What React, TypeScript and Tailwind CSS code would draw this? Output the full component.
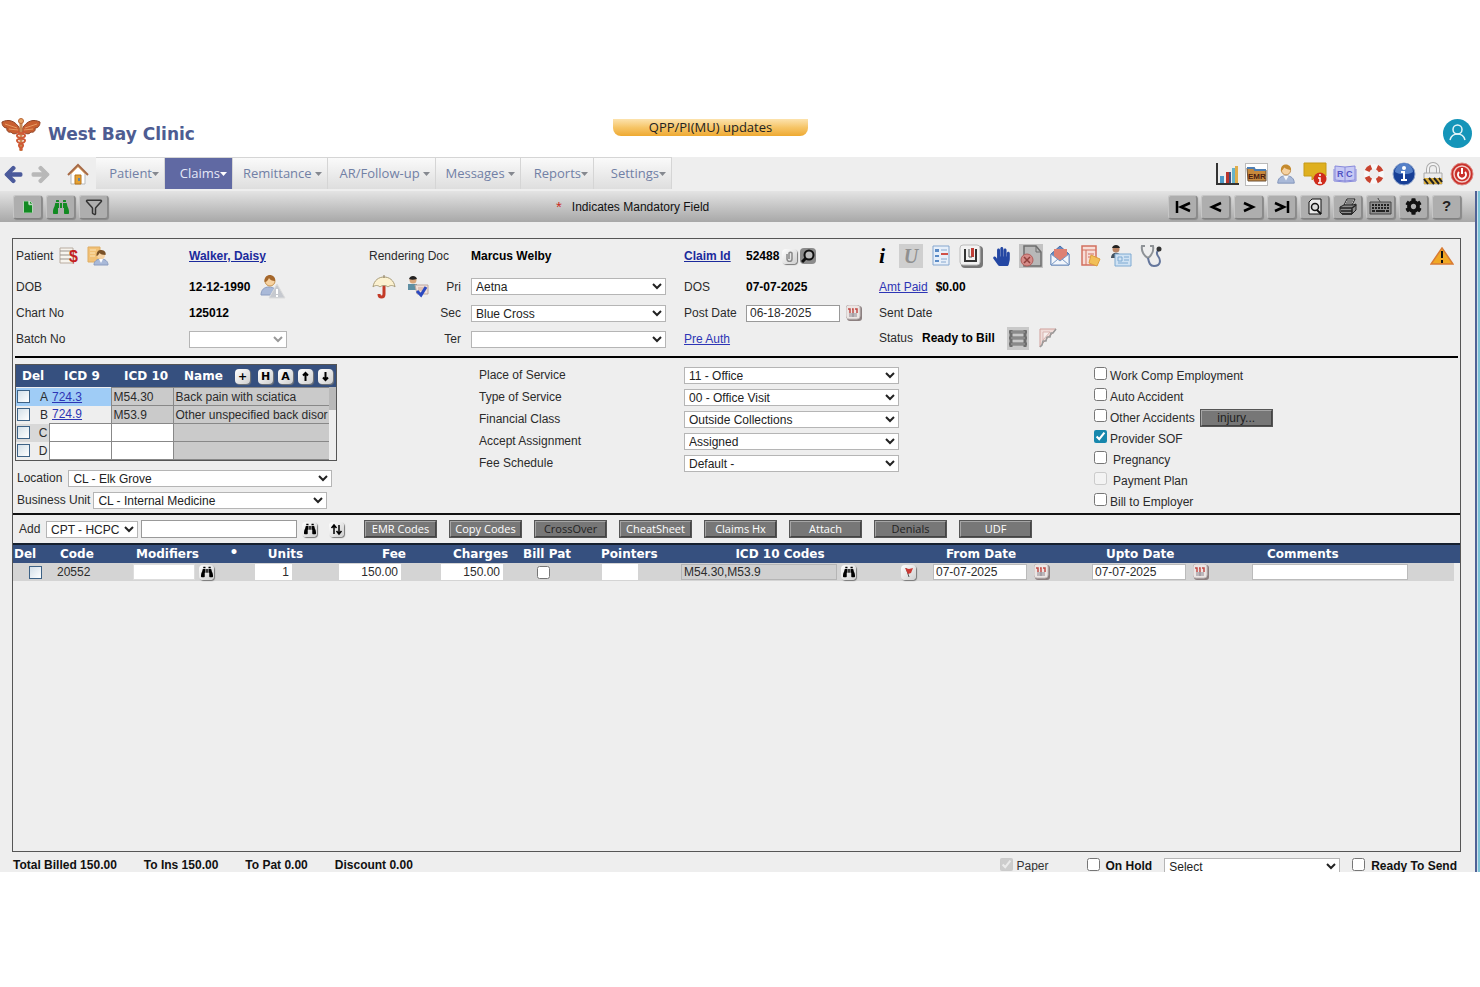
import { useState } from "react";
import type { ReactNode } from "react";
import {
  FaArrowLeft,
  FaArrowRight,
  FaBinoculars,
  FaCog,
  FaFile,
  FaHandPaper,
} from "react-icons/fa";
import { Filter } from "lucide-react";

interface ChildrenProps {
  children: ReactNode;
}

interface SelectBoxProps {
  label: string;
  value: string;
  className: string;
  disabled?: boolean;
}

interface CheckItemProps {
  label: string;
  checked?: boolean;
  disabled?: boolean;
  indent?: boolean;
}

const navItems = [
  { label: "Patient", width: "w-[69px]" },
  { label: "Claims", width: "w-[68px]" },
  { label: "Remittance ", width: "w-[95px]" },
  { label: "AR/Follow-up ", width: "w-[108px]" },
  { label: "Messages ", width: "w-[85px]" },
  { label: "Reports", width: "w-[73px]" },
  { label: "Settings", width: "w-[78px]" },
];

const serviceFields = [
  { label: "Place of Service", value: "11 - Office" },
  { label: "Type of Service", value: "00 - Office Visit" },
  { label: "Financial Class", value: "Outside Collections" },
  { label: "Accept Assignment", value: "Assigned" },
  { label: "Fee Schedule", value: "Default -" },
];

const diagnoses = [
  { key: "A", icd9: "724.3", icd10: "M54.30", name: "Back pain with sciatica" },
  { key: "B", icd9: "724.9", icd10: "M53.9", name: "Other unspecified back disor" },
  { key: "C", icd9: "", icd10: "", name: "" },
  { key: "D", icd9: "", icd10: "", name: "" },
];

const claimActions = [
  { label: "EMR Codes", disabled: false },
  { label: "Copy Codes", disabled: false },
  { label: "CrossOver", disabled: true },
  { label: "CheatSheet", disabled: false },
  { label: "Claims Hx", disabled: false },
  { label: "Attach", disabled: false },
  { label: "Denials", disabled: true },
  { label: "UDF", disabled: false },
];

/* ---------- small controls ---------- */

function SelectBox({ label, value, className, disabled }: SelectBoxProps) {
  return (
    <select
      aria-label={label}
      disabled={disabled}
      className={`h-[17px] border border-[#b5b5b5] bg-white text-[12px] leading-[15px] text-[#222] disabled:text-[#999] ${className}`}
    >
      <option>{value}</option>
    </select>
  );
}

function CheckItem({ label, checked, disabled, indent }: CheckItemProps) {
  return (
    <label className="flex h-[21px] items-center">
      <input
        type="checkbox"
        defaultChecked={checked}
        disabled={disabled}
        className="mb-1 h-[13px] w-[13px] accent-[#1787ad]"
      />
      <span className={indent ? "ml-[6px]" : "ml-[3px]"}>{label}</span>
    </label>
  );
}

function SquareCheck({ label }: { label: string }) {
  return (
    <input
      type="checkbox"
      aria-label={label}
      className="block h-[13px] w-[13px] shrink-0 appearance-none border border-[#3d6286] bg-linear-to-br from-[#d3dfe8] to-white"
    />
  );
}

function Tile({ label, children }: ChildrenProps & { label: string }) {
  return (
    <button
      type="button"
      aria-label={label}
      className="flex h-[15px] w-[15px] shrink-0 items-center justify-center rounded-[4px] bg-linear-to-br from-white to-[#cfcfcf] text-[11px] leading-none font-bold text-black shadow-[1px_1px_1px_#777]"
    >
      {children}
    </button>
  );
}

function ToolButton({ label, children }: ChildrenProps & { label: string }) {
  return (
    <button
      type="button"
      aria-label={label}
      className="flex h-[24px] w-[29px] items-center justify-center rounded-[3px] border border-t-[#c6c6c6] border-r-[#8a8a8a] border-b-[#808080] border-l-[#c6c6c6] bg-[#aeaeae] text-black shadow-[1px_1px_1px_#888]"
    >
      {children}
    </button>
  );
}

function IconButton({ label, children }: ChildrenProps & { label: string }) {
  return (
    <button type="button" aria-label={label} className="flex shrink-0 items-center justify-center">
      {children}
    </button>
  );
}

function GrayButton({ label, disabled, className }: { label: string; disabled?: boolean; className: string }) {
  return (
    <button
      type="button"
      disabled={disabled}
      className={`h-[18px] w-[73px] border-2 border-t-[#a5a5a5] border-r-[#444] border-b-[#444] border-l-[#a5a5a5] bg-[#777] text-center outline outline-[#555] -outline-offset-1 ${
        disabled ? "text-[#222]" : "text-white"
      } ${className}`}
    >
      {label}
    </button>
  );
}

/* ---------- icons ---------- */

function CaduceusLogo() {
  return (
    <svg width="40" height="34" viewBox="0 0 40 34">
      <path
        d="M19 11C14 2 7 1 1 4c0 4 2 6 5 6-1 3 2 5 4 4 2 3 6 2 9-1zM21 11c5-9 12-10 18-7 0 4-2 6-5 6 1 3-2 5-4 4-2 3-6 2-9-1z"
        fill="#c85f30"
        stroke="#8f4326"
      />
      <path d="M4 6l12 4M8 11l9 1M36 6l-12 4M32 11l-9 1" stroke="#e79a62" />
      <path d="M20 4v29" stroke="#c98a55" strokeWidth="3" />
      <path
        d="M15 13c2 3 10 2 9 5s-9 2-8 5 7 2 6 5-4 2-2 4M25 13c-2 3-10 2-9 5s9 2 8 5-7 2-6 5 4 2 2 4"
        fill="none"
        stroke="#cf5a35"
        strokeWidth="2"
      />
      <circle cx="20" cy="3" r="2.500" fill="#e8a564" stroke="#b86534" />
    </svg>
  );
}

function PersonIcon({ size = 24 }: { size?: number }) {
  return (
    <svg width={size} height={size} viewBox="0 0 24 24">
      <path d="M3 22c0-5 3-8 9-8s9 3 9 8z" fill="#a9b9d8" stroke="#7f92b8" />
      <path d="M9 14l3 5 3-5z" fill="#f5f7fb" />
      <circle cx="12" cy="8" r="5" fill="#f6d2a2" stroke="#b98546" />
      <path d="M6.500 9C6 3 9 1.500 12 1.500S18 4 17.500 8C15 7 12 7 10 5 9 7 8 8 6.500 9z" fill="#c58a2d" />
    </svg>
  );
}

function HomeIcon() {
  return (
    <svg width="22" height="22" viewBox="0 0 22 22">
      <path d="M4 11v10h14V11l-7-7z" fill="#fff" stroke="#b9b9b9" />
      <path d="M1 12L11 2l10 10" fill="none" stroke="#a76a45" strokeWidth="2" />
      <path d="M4 11l7-7 7 7" fill="none" stroke="#edbd85" />
      <path d="M8 12h6v9H8z" fill="#e5a233" stroke="#b8741c" />
      <path d="M11 15h2v3h-2z" fill="#6585a5" />
    </svg>
  );
}

function StatsIcon() {
  return (
    <svg width="24" height="24" viewBox="0 0 24 24">
      <path d="M2 1v21h22" fill="none" stroke="#333" strokeWidth="2" />
      <path d="M5 14h4v7H5z" fill="#4d9ac8" />
      <path d="M11 10h4v11h-4z" fill="#b9352d" />
      <path d="M14 10h2v11h-2z" fill="#3e4f80" />
      <path d="M17 6h3v15h-3z" fill="#67b3c9" />
      <path d="M20 4h3v17h-3z" fill="#e0ad4b" />
    </svg>
  );
}

function EmrIcon() {
  return (
    <span className="flex h-[23px] w-[23px] items-center justify-center border border-[#bbb] bg-white">
      <svg width="21" height="16" viewBox="0 0 21 16">
        <path d="M1 2h7l1 2h11v11H2z" fill="#c7893c" stroke="#6b5136" />
        <path d="M1 2h7l1 2h11" fill="none" stroke="#4d7eb3" strokeWidth="2" />
        <text x="2" y="13" fontSize="8" fontWeight="700" fontFamily="Liberation Sans, sans-serif" fill="#4b1b10">
          EMR
        </text>
      </svg>
    </span>
  );
}

function NoticeIcon() {
  return (
    <svg width="24" height="24" viewBox="0 0 24 24">
      <path d="M1 1h22v13H13l-4 4v-4H1z" fill="#dfb01f" stroke="#c69a18" />
      <circle cx="17" cy="17" r="6.500" fill="#cf2b1c" />
      <path d="M17 12v2M15 16h2v5M15 21h4" fill="none" stroke="#fff" strokeWidth="1.500" />
    </svg>
  );
}

function BookIcon() {
  return (
    <svg width="24" height="20" viewBox="0 0 24 20">
      <path d="M2 2l10 1 10-1v14l-10 1-10-1z" fill="#c7c9f4" stroke="#8789dc" />
      <path d="M12 3v15M1 5v12l11 1 11-1V5" fill="none" stroke="#8789dc" />
      <text x="4" y="13" fontSize="9" fontWeight="700" fontFamily="Liberation Sans, sans-serif" fill="#5154c5">
        R
      </text>
      <text x="13" y="13" fontSize="9" fontWeight="700" fontFamily="Liberation Sans, sans-serif" fill="#5154c5">
        C
      </text>
    </svg>
  );
}

function LifebuoyIcon() {
  return (
    <svg width="22" height="22" viewBox="0 0 22 22">
      <circle cx="11" cy="11" r="7.500" fill="none" stroke="#f8f8f8" strokeWidth="5" />
      <circle
        cx="11"
        cy="11"
        r="7.500"
        fill="none"
        stroke="#c8432f"
        strokeWidth="5"
        strokeDasharray="5.800 5.980"
        strokeDashoffset="-3"
      />
    </svg>
  );
}

function InfoIcon() {
  return (
    <svg width="24" height="24" viewBox="0 0 24 24">
      <circle cx="12" cy="12" r="11" fill="#173f96" stroke="#8fa5cc" />
      <path d="M3 10a9 9 0 0 1 18 0c-5 3-13 3-18 0z" fill="#5580c8" />
      <circle cx="12" cy="6" r="2" fill="#fff" />
      <path d="M9 10h3v8M9 18h6" fill="none" stroke="#fff" strokeWidth="2" />
    </svg>
  );
}

function LockIcon() {
  return (
    <svg width="22" height="24" viewBox="0 0 22 24">
      <path d="M6 12V7a5 5 0 0 1 10 0v5" fill="none" stroke="#aaa" strokeWidth="4" />
      <path d="M6 12V7a5 5 0 0 1 10 0v5" fill="none" stroke="#f3f3f3" strokeWidth="2" />
      <path d="M2 11h18v11H2z" fill="#ececec" stroke="#aaa" />
      <path d="M2 16h18v6H2z" fill="#ddb03c" />
      <path d="M2 17l4 5M7 16l5 6M12 16l5 6M17 16l3 4" stroke="#222" strokeWidth="2" />
    </svg>
  );
}

function PowerIcon() {
  return (
    <svg width="24" height="24" viewBox="0 0 24 24">
      <circle cx="12" cy="12" r="11" fill="#c9302a" stroke="#dd8a84" />
      <circle cx="12" cy="12" r="8" fill="none" stroke="#f3cdc9" strokeWidth="1.500" />
      <path d="M9 10a4 4 0 1 0 6 0" fill="none" stroke="#fff" strokeWidth="2" />
      <path d="M12 6v6" stroke="#fff" strokeWidth="2" />
    </svg>
  );
}

function LedgerIcon() {
  return (
    <svg width="20" height="18" viewBox="0 0 20 18">
      <path d="M1 1h13v15H1z" fill="#f7f4ee" stroke="#b9aca0" />
      <path d="M1 4h11M1 8h11M1 12h11" stroke="#99918a" />
      <text x="10" y="15" fontSize="16" fontWeight="700" fontFamily="Liberation Sans, sans-serif" fill="#c42020">
        $
      </text>
    </svg>
  );
}

function PatientFileIcon() {
  return (
    <svg width="22" height="20" viewBox="0 0 22 20">
      <path d="M1 1h12v15H1z" fill="#f2c176" stroke="#dfad62" />
      <path d="M3 4h6M3 7h5M3 10h5" stroke="#fbe4b9" />
      <path d="M7 19c0-4 3-6 7-6s7 2 7 6z" fill="#a9b9d8" stroke="#8a9cc0" />
      <path d="M12 13l2 4 2-4z" fill="#fff" />
      <circle cx="14" cy="9" r="4" fill="#f6d2a2" />
      <path d="M9.500 10c0-5 2-6 5-6s5 3 4 5c-3 0-5-1-6-2-1 2-2 3-3 3z" fill="#7a5126" />
    </svg>
  );
}

function PatientAlertIcon() {
  return (
    <svg width="26" height="25" viewBox="0 0 26 25">
      <path d="M1 21c0-5 3-8 8-8s8 3 8 8z" fill="#a9b9d8" stroke="#8a9cc0" />
      <circle cx="10" cy="7" r="5" fill="#f6d2a2" stroke="#c79450" />
      <path d="M4.500 8C4 2 8 1 10 1s6 2 5 6c-3 0-5-1-6-3-1 2-2 4-4.500 4z" fill="#a5672c" />
      <path d="M17 10l8 14H9z" fill="#c6c9cf" stroke="#dcdcdc" />
      <path d="M17 15v5M17 21v2" stroke="#fff" strokeWidth="2" />
    </svg>
  );
}

function UmbrellaIcon() {
  return (
    <svg width="24" height="24" viewBox="0 0 24 24">
      <path d="M12 10v9c0 4-5 4-5 0" fill="none" stroke="#c33a27" strokeWidth="3" />
      <path d="M1 12C2 5 7 2 12 2s10 3 11 10c-2-2-5-2-7 0-2-2-6-2-8 0-2-2-5-2-7 0z" fill="#fbf1d0" stroke="#a99c78" />
      <path d="M12 0v3" stroke="#8a7a5a" />
    </svg>
  );
}

function EligibilityIcon() {
  return (
    <svg width="22" height="22" viewBox="0 0 22 22">
      <circle cx="6" cy="4" r="3.500" fill="#d9a57a" />
      <path d="M2 3c1-4 7-4 8 0-3 1-6 1-8 0z" fill="#222" />
      <path d="M1 8h9v6H1z" fill="#5f8fa3" />
      <path d="M8 9h13v9H10z" fill="#f1dfd8" stroke="#bba7a0" />
      <path d="M11 12h7M11 14h6" stroke="#c9a090" />
      <path d="M10 15l4 4 5-8" fill="none" stroke="#2b49c0" strokeWidth="3" />
    </svg>
  );
}

function CalendarIcon() {
  return (
    <svg width="16" height="16" viewBox="0 0 16 16">
      <rect x="1" y="1" width="15" height="15" rx="3" fill="#8c8080" />
      <rect x="0" y="0" width="14" height="14" rx="3" fill="#ece6e4" stroke="#c4bcbc" />
      <path d="M2 4h2v4M6 4h1v4M9 4h2v4" fill="none" stroke="#c14b45" strokeWidth="1.500" />
      <path d="M3 9h8M3 11h8M7 8v4" stroke="#8d8790" />
    </svg>
  );
}

function PrinterIcon() {
  return (
    <svg width="20" height="18" viewBox="0 0 20 18">
      <path d="M6 7l3-6h8l-3 6z" fill="#e2e2e2" stroke="#222" />
      <path d="M9 3h6M8 5h6" stroke="#222" />
      <path d="M2 9l4-2h9l3-1v6l-4 4H4l-2-2z" fill="#8c8c8c" stroke="#222" />
      <path d="M2 10h12l4-3M3 13h11M4 16h10M14 10v6" fill="none" stroke="#222" strokeWidth="1.500" />
    </svg>
  );
}

function KeyboardIcon() {
  return (
    <svg width="23" height="20" viewBox="0 0 23 20">
      <path d="M11 5c0-2-2-2-2-4" fill="none" stroke="#444" />
      <path d="M1 5h21v12H1z" fill="#8d8d8d" stroke="#444" />
      <path d="M3 8h17M3 11h17" stroke="#222" strokeWidth="2" strokeDasharray="2 1" />
      <path d="M3 14h3M7 14h9M17 14h3" stroke="#222" strokeWidth="2" />
    </svg>
  );
}

function SwapIcon() {
  return (
    <svg width="13" height="13" viewBox="0 0 13 13">
      <path d="M4 11V3M1.500 5L4 2l2.500 3M9 2v8M6.500 8L9 11l2.500-3" fill="none" stroke="#000" strokeWidth="1.500" />
    </svg>
  );
}

function DetailIcons() {
  return (
    <div className="flex items-center gap-[6px] text-[#222]">
      <button
        type="button"
        aria-label="Claim info"
        className="h-[24px] w-[14px] text-left font-['Liberation_Serif',serif] text-[22px] leading-none font-bold text-black italic"
      >
        i
      </button>
      <button type="button" aria-label="UB claim" className="h-[24px] w-[24px] bg-[#cfcfcf] font-['Liberation_Serif',serif] text-[20px] leading-none font-bold text-[#909090] italic">
        U
      </button>
      <IconButton label="Claim report">
        <svg width="24" height="22" viewBox="0 0 24 22">
          <path d="M4 1h16v19H4z" fill="#e7eff9" stroke="#86a7cf" />
          <path d="M6 4h4v3H6zM6 10h4v2H6zM6 15h4v2H6z" fill="#5b8bc6" />
          <path d="M12 5h6M12 14h6M12 17h5" stroke="#86a7cf" />
          <path d="M12 9h7" stroke="#d05048" strokeWidth="2" />
        </svg>
      </IconButton>
      <IconButton label="Save claim">
        <svg width="24" height="24" viewBox="0 0 24 24">
          <rect x="2" y="2" width="22" height="22" rx="4" fill="#777" />
          <rect x="1" y="1" width="20" height="20" rx="3" fill="#f2f2f2" stroke="#bbb" />
          <path d="M6 5v12h11V5" fill="none" stroke="#333" strokeWidth="2" />
          <path d="M12 4h3v9h-3z" fill="#c03e37" />
          <path d="M10 5v8h3" fill="none" stroke="#555" />
        </svg>
      </IconButton>
      <IconButton label="Hold">
        <span className="flex w-[24px] justify-center text-[#2447a3]">
          <FaHandPaper size={19} />
        </span>
      </IconButton>
      <IconButton label="Void document">
        <svg width="24" height="24" viewBox="0 0 24 24">
          <path d="M0 0h24v24H0z" fill="#c2c2c2" />
          <path d="M5 2h12l5 6v14H5z" fill="#b8b8b8" stroke="#6d6d6d" strokeWidth="1.500" />
          <path d="M17 2v6h5" fill="none" stroke="#6d6d6d" />
          <circle cx="8" cy="16" r="6" fill="#d58b88" stroke="#b25d59" />
          <path d="M5 13l6 6M11 13l-6 6" stroke="#8f3f3b" strokeWidth="1.500" />
        </svg>
      </IconButton>
      <IconButton label="Letter">
        <svg width="24" height="22" viewBox="0 0 24 22">
          <path d="M2 9l9-8 9 8v11H2z" fill="#6689c2" stroke="#496da8" />
          <path d="M5 4h13v11H5z" fill="#de8173" />
          <path d="M2 9l9 7 9-7v11H2z" fill="#f3f6fb" stroke="#7898c4" />
          <path d="M2 20l7-6M20 20l-7-6" stroke="#7898c4" />
        </svg>
      </IconButton>
      <IconButton label="Statement">
        <svg width="24" height="22" viewBox="0 0 24 22">
          <path d="M3 1h14v19H3z" fill="#f7ded8" stroke="#d2705f" strokeWidth="1.500" />
          <path d="M3 5h14M7 5v15M9 9h6M9 12h6" stroke="#d2705f" />
          <path d="M12 10l9 4-3 7-8-3z" fill="#f2bf58" stroke="#dd9e3d" />
        </svg>
      </IconButton>
      <IconButton label="Patient card">
        <svg width="24" height="22" viewBox="0 0 24 22">
          <circle cx="7" cy="4" r="3.500" fill="#b88364" />
          <path d="M3 3c1-4 7-4 8 0z" fill="#222" />
          <path d="M2 13c0-7 10-7 10 0z" fill="#44525f" />
          <path d="M6 9h16v12H6z" fill="#cfe2f3" stroke="#7eaad2" />
          <path d="M9 12h4v4H9zM15 12h5M15 15h5M9 18h10" fill="none" stroke="#7eaad2" />
        </svg>
      </IconButton>
      <IconButton label="Encounter">
        <svg width="24" height="24" viewBox="0 0 24 24">
          <path d="M6 2H3c-1 5 2 10 6 12 4-3 6-7 5-12h-3" fill="none" stroke="#8e9296" strokeWidth="2" />
          <path d="M9 14c1 5 2 8 6 8 7 0 7-6 4-10-2-3-1-5 1-6" fill="none" stroke="#64769c" strokeWidth="2" />
          <circle cx="20" cy="5" r="2.500" fill="#333" />
        </svg>
      </IconButton>
    </div>
  );
}

/* ---------- page sections ---------- */

function Header() {
  return (
    <header className="flex h-[42px] bg-white">
      <div className="flex h-[40px] w-[613px] items-center gap-[7px] pl-px">
        <CaduceusLogo />
        <h1 className="font-['DejaVu_Sans',sans-serif] text-[17px] font-bold text-[#4d5c92]">West Bay Clinic</h1>
      </div>
      <button
        type="button"
        className="mt-1 h-[17px] w-[195px] rounded-b-[8px] bg-linear-to-b from-[#fce3ad] via-[#f6c566] to-[#eea92f] font-['Open_Sans',sans-serif] text-[13px] leading-[15px] text-[#222]"
      >
        QPP/PI(MU) updates
      </button>
      <button type="button" aria-label="Account" className="mt-1 mr-2 ml-auto h-[29px] w-[29px]">
        <svg width="29" height="29" viewBox="0 0 29 29">
          <circle cx="14.500" cy="14.500" r="14.500" fill="#1595b9" />
          <circle cx="14.500" cy="10.500" r="4.500" fill="none" stroke="#e5f5f9" strokeWidth="1.500" />
          <path d="M7 21c1-4 4-6 7.500-6s6.500 2 7.500 6" fill="none" stroke="#e5f5f9" strokeWidth="1.500" />
        </svg>
      </button>
    </header>
  );
}

function Navbar() {
  const [active, setActive] = useState("Claims");

  return (
    <nav className="flex h-[34px] bg-[#eee]">
      <div className="flex w-[96px] items-center pl-1">
        <button type="button" aria-label="Back" className="text-[#4b5a9b]">
          <FaArrowLeft size={19} stroke="currentColor" strokeWidth={35} />
        </button>
        <button type="button" aria-label="Forward" className="ml-2 text-[#b8b8b8]">
          <FaArrowRight size={19} stroke="currentColor" strokeWidth={35} />
        </button>
        <button type="button" aria-label="Home" className="ml-[17px]">
          <HomeIcon />
        </button>
      </div>
      {navItems.map((item) => (
        <button
          type="button"
          key={item.label}
          onClick={() => setActive(item.label)}
          className={`flex h-[32px] items-center justify-end border-t border-r border-[#d5d5d5] pr-[5px] font-['Open_Sans',sans-serif] text-[13px] whitespace-pre ${item.width} ${
            active === item.label
              ? "bg-[#6069a3] text-[#e5e8f8]"
              : "bg-linear-to-b from-[#fafafa] to-[#dedede] text-[#7180a5]"
          }`}
        >
          {item.label}
          <svg width="7" height="4" viewBox="0 0 7 4" fill={active === item.label ? "#fff" : "#85888f"}>
            <path d="M0 0h7L3.500 4z" />
          </svg>
        </button>
      ))}
      <div className="mr-[6px] ml-auto flex w-[259px] items-center justify-between">
        <IconButton label="Statistics"><StatsIcon /></IconButton>
        <IconButton label="EMR"><EmrIcon /></IconButton>
        <IconButton label="Patient"><PersonIcon size={22} /></IconButton>
        <IconButton label="Notices"><NoticeIcon /></IconButton>
        <IconButton label="Reference codes"><BookIcon /></IconButton>
        <IconButton label="Support"><LifebuoyIcon /></IconButton>
        <IconButton label="Information"><InfoIcon /></IconButton>
        <IconButton label="Lock"><LockIcon /></IconButton>
        <IconButton label="Sign out"><PowerIcon /></IconButton>
      </div>
    </nav>
  );
}

function Toolbar() {
  return (
    <div className="flex h-[31px] items-center bg-linear-to-b from-[#e4e4e4] to-[#a8a8a8] pr-[14px]">
      <div className="flex w-[556px] gap-1 pl-[13px]">
        <ToolButton label="New claim">
          <FaFile size={12} color="#128a22" stroke="#d9f0dc" strokeWidth={30} />
        </ToolButton>
        <ToolButton label="Find">
          <FaBinoculars size={16} color="#128a22" />
        </ToolButton>
        <ToolButton label="Filter">
          <Filter size={18} color="#333" strokeWidth={2} />
        </ToolButton>
      </div>
      <p className="flex gap-[10px] text-[12px] text-[#111]">
        <span className="text-[15px] leading-[18px] text-[#cc2b1d]">*</span>
        Indicates Mandatory Field
      </p>
      <div className="ml-auto flex gap-1">
        <ToolButton label="First">
          <svg width="16" height="14" viewBox="0 0 16 14" fill="none" stroke="#000" strokeWidth="2.500">
            <path d="M2 1v12M15 3L6 7l9 4" />
          </svg>
        </ToolButton>
        <ToolButton label="Previous">
          <svg width="14" height="14" viewBox="0 0 14 14" fill="none" stroke="#000" strokeWidth="2.500">
            <path d="M12 3L3 7l9 4" />
          </svg>
        </ToolButton>
        <ToolButton label="Next">
          <svg width="14" height="14" viewBox="0 0 14 14" fill="none" stroke="#000" strokeWidth="2.500">
            <path d="M2 3l9 4-9 4" />
          </svg>
        </ToolButton>
        <ToolButton label="Last">
          <svg width="16" height="14" viewBox="0 0 16 14" fill="none" stroke="#000" strokeWidth="2.500">
            <path d="M14 1v12M1 3l9 4-9 4" />
          </svg>
        </ToolButton>
        <ToolButton label="Preview">
          <svg width="16" height="18" viewBox="0 0 16 18">
            <path d="M5 1h9v15H2V4z" fill="#e8e8e8" stroke="#111" />
            <circle cx="8" cy="9" r="3.500" fill="#ddd" stroke="#111" strokeWidth="1.500" />
            <path d="M10 12l4 4" stroke="#111" strokeWidth="2" />
          </svg>
        </ToolButton>
        <ToolButton label="Print">
          <PrinterIcon />
        </ToolButton>
        <ToolButton label="Keyboard">
          <KeyboardIcon />
        </ToolButton>
        <ToolButton label="Settings">
          <FaCog size={17} color="#111" />
        </ToolButton>
        <ToolButton label="Help">
          <span className="text-[15px] font-bold text-[#222]">?</span>
        </ToolButton>
      </div>
    </div>
  );
}

function ClaimSummary() {
  return (
    <section className="mx-[2px] grid grid-cols-[173px_180px_102px_213px_62px_133px_1fr] grid-rows-[34px_27px_26px_30px] border-b-2 border-black pl-px">
      <div className="flex items-center gap-[6px]">
        Patient
        <IconButton label="Ledger"><LedgerIcon /></IconButton>
        <span className="ml-[2px] flex"><IconButton label="Patient file"><PatientFileIcon /></IconButton></span>
      </div>
      <a href="#patient" className="self-center font-bold text-[#1b2a9c] underline">Walker, Daisy</a>
      <span className="self-center">Rendering Doc</span>
      <b className="self-center text-black">Marcus Welby</b>
      <a href="#claim" className="self-center font-bold text-[#1b2a9c] underline">Claim Id</a>
      <div className="flex items-center gap-[3px]">
        <b className="text-black">52488</b>
        <Tile label="Attachments">
          <svg width="9" height="12" viewBox="0 0 9 12">
            <path d="M2 4v5a2.500 2.500 0 0 0 5 0V3a2 2 0 0 0-3 0v6" fill="none" stroke="#888" strokeWidth="1.500" />
          </svg>
        </Tile>
        <button type="button" aria-label="Search claim" className="flex h-[16px] w-[16px] items-center justify-center rounded-[4px] bg-[#8b8b8b]">
          <svg width="14" height="14" viewBox="0 0 14 14">
            <circle cx="8" cy="6" r="4.500" fill="#bbb" stroke="#111" strokeWidth="2" />
            <path d="M5 9l-4 4" stroke="#111" strokeWidth="3" />
          </svg>
        </button>
      </div>
      <div className="flex items-center justify-between pr-1">
        <DetailIcons />
        <IconButton label="Alert">
          <svg width="24" height="18" viewBox="0 0 24 18">
            <path d="M12 1l11 16H1z" fill="#f0a824" stroke="#d87b34" strokeWidth="1.500" />
            <path d="M12 4v7M12 13v3" stroke="#111" strokeWidth="2" />
          </svg>
        </IconButton>
      </div>

      <span className="self-center">DOB</span>
      <div className="flex items-center gap-[10px]">
        <b className="text-black">12-12-1990</b>
        <IconButton label="Patient alert"><PatientAlertIcon /></IconButton>
      </div>
      <div className="flex items-center gap-[11px] pl-[3px]">
        <IconButton label="Insurance"><UmbrellaIcon /></IconButton>
        <IconButton label="Eligibility"><EligibilityIcon /></IconButton>
        <span className="ml-auto pr-[10px]">Pri</span>
      </div>
      <SelectBox label="Pri" value="Aetna" className="w-[195px] self-center" />
      <span className="self-center">DOS</span>
      <b className="self-center text-black">07-07-2025</b>
      <div className="flex items-center gap-2">
        <a href="#paid" className="text-[#2d35b5] underline">Amt Paid</a>
        <b className="text-black">$0.00</b>
      </div>

      <span className="self-center">Chart No</span>
      <b className="self-center text-black">125012</b>
      <span className="self-center pr-[10px] text-right">Sec</span>
      <SelectBox label="Sec" value="Blue Cross" className="w-[195px] self-center" />
      <label htmlFor="post-date" className="self-center">Post Date</label>
      <div className="flex items-center gap-[6px]">
        <input
          id="post-date"
          defaultValue="06-18-2025"
          className="h-[17px] w-[94px] border border-[#999] bg-white px-[3px]"
        />
        <IconButton label="Pick post date"><CalendarIcon /></IconButton>
      </div>
      <span className="self-center">Sent Date</span>

      <span className="h-[26px] leading-[26px]">Batch No</span>
      <div className="flex h-[26px] items-center">
        <SelectBox label="Batch No" value="" disabled className="w-[98px]" />
      </div>
      <span className="h-[26px] pr-[10px] text-right leading-[26px]">Ter</span>
      <div className="flex h-[26px] items-center">
        <SelectBox label="Ter" value="" className="w-[195px]" />
      </div>
      <a href="#auth" className="h-[26px] leading-[26px] text-[#2d35b5] underline">Pre Auth</a>
      <span />
      <div className="flex h-[24px] items-center">
        Status
        <b className="mr-3 ml-[9px] text-black">Ready to Bill</b>
        <IconButton label="Claim timeline">
          <svg width="22" height="23" viewBox="0 0 22 23">
            <path d="M0 0h22v23H0z" fill="#c9c9c9" />
            <path d="M4 3v17M18 3v17M2 5h18M2 11h18M2 17h18" stroke="#6e6e6e" strokeWidth="3" />
            <path d="M4 5h14M4 11h14M4 17h14" stroke="#a5a5a5" />
          </svg>
        </IconButton>
        <span className="ml-[9px] flex">
          <IconButton label="Claim workflow">
            <svg width="20" height="22" viewBox="0 0 20 22">
              <path d="M2 2h16l-4 5-3 2-3 4-3 3-3 4z" fill="#f0dcd9" stroke="#d0a19c" />
              <path d="M18 2l-3 4h-2l-1 4h-3l-1 4H5l-1 4-2 2" fill="none" stroke="#999" strokeWidth="1.500" />
              <path d="M5 5h7l-7 8z" fill="#f6eeec" stroke="#d9b5b1" />
            </svg>
          </IconButton>
        </span>
      </div>
    </section>
  );
}

function DiagnosisTable() {
  return (
    <div className="h-[97px] w-[322px] overflow-hidden border border-[#555] bg-[#eee]">
      <div className="flex h-[22px] items-center bg-[#36507f] font-['DejaVu_Sans',sans-serif] text-[12px] font-bold text-white">
        <span className="w-[48px] pl-[6px]">Del</span>
        <span className="w-[60px]">ICD 9</span>
        <span className="w-[60px]">ICD 10</span>
        <span className="w-[51px]">Name</span>
        <Tile label="Add diagnosis">+</Tile>
        <span className="ml-2 flex gap-[5px]">
          <Tile label="History">H</Tile>
          <Tile label="All">A</Tile>
          <Tile label="Move up">
            <svg width="9" height="11" viewBox="0 0 9 11"><path d="M4.500 10V2M2 4.500L4.500 2 7 4.500" fill="none" stroke="#000" strokeWidth="2" /></svg>
          </Tile>
          <Tile label="Move down">
            <svg width="9" height="11" viewBox="0 0 9 11"><path d="M4.500 1v8M2 6.500L4.500 9 7 6.500" fill="none" stroke="#000" strokeWidth="2" /></svg>
          </Tile>
        </span>
      </div>
      <div className="flex">
        <table className="w-[313px] table-fixed border-collapse leading-[16px]">
          <colgroup>
            <col className="w-[33px]" />
            <col className="w-[62px]" />
            <col className="w-[62px]" />
            <col />
          </colgroup>
          <tbody>
            {diagnoses.map((row, index) => (
              <tr key={row.key} className="h-[18px]">
                <td className={`p-0 ${index === 0 ? "bg-[#9fccf6]" : index === 2 ? "bg-[#d8d8d8]" : ""}`}>
                  <div className="flex items-center justify-between px-px">
                    <SquareCheck label={`Delete ${row.key}`} />
                    <span>{row.key}</span>
                  </div>
                </td>
                <td
                  className={`p-0 pl-[3px] ${
                    index === 0 ? "bg-[#9fccf6]" : row.icd9 ? "" : "border border-[#888] bg-white"
                  }`}
                >
                  {row.icd9 && <a href={`#${row.icd9}`} className="text-[#2d35b5] underline">{row.icd9}</a>}
                </td>
                <td className={`border border-[#888] p-0 pl-[2px] ${row.icd10 ? "bg-[#cacaca]" : "bg-white"}`}>
                  {row.icd10}
                </td>
                <td className="border border-r-0 border-[#888] bg-[#cacaca] p-0 pl-[2px] whitespace-nowrap">
                  {row.name}
                </td>
              </tr>
            ))}
          </tbody>
        </table>
        <div className="flex-1 bg-[#eee]">
          <div className="h-[23px] bg-[#b9b9b9]" />
        </div>
      </div>
    </div>
  );
}

function ClaimDetails() {
  return (
    <section className="flex h-[157px] border-b-2 border-[#111] pt-[6px]">
      <div className="w-[466px] pl-[2px]">
        <DiagnosisTable />
        <label className="mt-2 flex h-[18px] items-center gap-[6px] pl-[2px]">
          Location
          <SelectBox label="Location" value="CL - Elk Grove" className="w-[264px]" />
        </label>
        <label className="mt-1 flex h-[18px] items-center gap-[3px] pl-[2px]">
          Business Unit
          <SelectBox label="Business Unit" value="CL - Internal Medicine" className="w-[234px]" />
        </label>
      </div>
      <div className="w-[615px]">
        {serviceFields.map((field) => (
          <label key={field.label} className="flex h-[22px] items-center">
            <span className="w-[205px]">{field.label}</span>
            <SelectBox label={field.label} value={field.value} className="w-[215px]" />
          </label>
        ))}
      </div>
      <div className="pt-px">
        <CheckItem label="Work Comp Employment" />
        <CheckItem label="Auto Accident" />
        <div className="flex h-[21px] items-center">
          <CheckItem label="Other Accidents" />
          <GrayButton label="injury..." disabled className="ml-[5px] text-[12px] leading-[14px]" />
        </div>
        <CheckItem label="Provider SOF" checked />
        <CheckItem label="Pregnancy" indent />
        <CheckItem label="Payment Plan" disabled indent />
        <CheckItem label="Bill to Employer" />
      </div>
    </section>
  );
}

function ActionBar() {
  return (
    <div className="flex h-[30px] items-center border-b-2 border-[#16202f] pl-[6px]">
      <span className="w-[27px]">Add</span>
      <SelectBox label="Code type" value="CPT - HCPC" className="w-[92px]" />
      <input aria-label="Code" className="mr-[5px] ml-[3px] h-[18px] w-[156px] border border-[#999] bg-white px-1" />
      <Tile label="Find code"><FaBinoculars size={12} /></Tile>
      <span className="mr-5 ml-3 flex">
        <Tile label="Swap order"><SwapIcon /></Tile>
      </span>
      <div className="flex gap-3">
        {claimActions.map((action) => (
          <GrayButton
            key={action.label}
            label={action.label}
            disabled={action.disabled}
            className="font-['Open_Sans',sans-serif] text-[11px] leading-[14px]"
          />
        ))}
      </div>
    </div>
  );
}

function ChargeTable() {
  return (
    <table className="w-full table-fixed border-separate border-spacing-0 text-[12px]">
      <colgroup>
        <col className="w-[40px]" />
        <col className="w-[80px]" />
        <col className="w-[90px]" />
        <col className="w-[22px]" />
        <col className="w-[81px]" />
        <col className="w-[110px]" />
        <col className="w-[80px]" />
        <col className="w-[70px]" />
        <col className="w-[94px]" />
        <col className="w-[200px]" />
        <col className="w-[202px]" />
        <col className="w-[168px]" />
        <col />
      </colgroup>
      <thead className="bg-[#36507f] font-['DejaVu_Sans',sans-serif] text-white">
        <tr className="h-[18px] text-left leading-[18px] whitespace-nowrap">
          <th className="p-0 pl-px">Del</th>
          <th className="p-0 pl-[7px]">Code</th>
          <th className="p-0 pl-[3px]">Modifiers</th>
          <th className="p-0 pb-1 text-center text-[14px] leading-[10px]">•</th>
          <th className="p-0 text-center">Units</th>
          <th className="p-0 pl-[56px]">Fee</th>
          <th className="p-0 pl-[17px]">Charges</th>
          <th className="p-0 pl-[7px]">Bill Pat</th>
          <th className="p-0 pl-[15px]">Pointers</th>
          <th className="p-0 text-center">ICD 10 Codes</th>
          <th className="p-0 text-center">From Date</th>
          <th className="p-0 pl-[24px]">Upto Date</th>
          <th className="p-0 pl-[17px]">Comments</th>
        </tr>
      </thead>
      <tbody>
        <tr className="h-[18px] bg-[#d4d4d4]">
          <td className="p-0">
            <div className="flex justify-end pr-[11px]"><SquareCheck label="Delete 20552" /></div>
          </td>
          <td className="p-0 pl-1">20552</td>
          <td className="p-0">
            <div className="flex items-center gap-1">
              <input aria-label="Modifiers" className="h-[16px] w-[62px] border border-[#ddd] bg-white" />
              <Tile label="Find modifier"><FaBinoculars size={12} /></Tile>
            </div>
          </td>
          <td className="p-0" />
          <td className="p-0 pl-[10px]">
            <input aria-label="Units" defaultValue="1" className="block h-[16px] w-[37px] bg-white pr-[3px] text-right" />
          </td>
          <td className="p-0 pl-[13px]">
            <input aria-label="Fee" defaultValue="150.00" className="block h-[16px] w-[62px] bg-white pr-[3px] text-right" />
          </td>
          <td className="p-0 pl-[5px]">
            <input aria-label="Charges" defaultValue="150.00" className="block h-[16px] w-[62px] bg-white pr-[3px] text-right" />
          </td>
          <td className="p-0 pl-[21px]">
            <input type="checkbox" aria-label="Bill patient" className="block h-[13px] w-[13px]" />
          </td>
          <td className="p-0 pl-[16px]">
            <input aria-label="Pointers" className="block h-[16px] w-[36px] bg-white" />
          </td>
          <td className="p-0 pl-px">
            <div className="flex items-center gap-1">
              <input
                aria-label="ICD 10 codes"
                readOnly
                defaultValue="M54.30,M53.9"
                className="h-[16px] w-[156px] border border-[#b5b5b5] bg-[#d0d0d0] px-[2px]"
              />
              <Tile label="Find ICD 10 code"><FaBinoculars size={12} /></Tile>
            </div>
          </td>
          <td className="p-0 pl-[21px]">
            <div className="flex items-center">
              <Tile label="Flag">
                <svg width="10" height="11" viewBox="0 0 10 11"><path d="M2 1l3 9" stroke="#555" /><path d="M1 1l4 1 4-1-2 5-3 1z" fill="#cc3a35" /></svg>
              </Tile>
              <input aria-label="From date" defaultValue="07-07-2025" className="mr-[7px] ml-[17px] h-[16px] w-[94px] border border-[#bbb] bg-white px-[2px]" />
              <IconButton label="Pick from date"><CalendarIcon /></IconButton>
            </div>
          </td>
          <td className="p-0 pl-[10px]">
            <div className="flex items-center gap-[7px]">
              <input aria-label="Upto date" defaultValue="07-07-2025" className="h-[16px] w-[94px] border border-[#bbb] bg-white px-[2px]" />
              <IconButton label="Pick upto date"><CalendarIcon /></IconButton>
            </div>
          </td>
          <td className="border-r-6 border-[#eee] p-0 pl-[2px]">
            <input aria-label="Comments" className="block h-[16px] w-[156px] border border-[#bbb] bg-white" />
          </td>
        </tr>
      </tbody>
    </table>
  );
}

function TotalsBar() {
  return (
    <footer className="flex h-[20px] items-start overflow-hidden pr-[18px] pl-[13px] font-bold text-[#111]">
      <div className="flex gap-[27px] pt-1 leading-[18px]">
        <span>Total Billed 150.00</span>
        <span>To Ins 150.00</span>
        <span>To Pat 0.00</span>
        <span>Discount 0.00</span>
      </div>
      <div className="ml-auto flex items-start pt-[6px] leading-[16px]">
        <label className="flex gap-1 font-normal text-[#333]">
          <input type="checkbox" defaultChecked disabled className="h-[13px] w-[13px]" />
          Paper
        </label>
        <label className="ml-[38px] flex gap-[6px]">
          <input type="checkbox" className="h-[13px] w-[13px]" />
          On Hold
        </label>
        <SelectBox label="Hold reason" value="Select" className="mr-3 ml-3 w-[176px] font-normal" />
        <label className="flex gap-[6px]">
          <input type="checkbox" className="h-[13px] w-[13px]" />
          Ready To Send
        </label>
      </div>
    </footer>
  );
}

export default function App() {
  return (
    <div className="min-h-screen bg-white py-[115px] font-['Liberation_Sans',Arial,sans-serif] text-[12px] text-[#2b2b2b]">
      <Header />
      <Navbar />
      <div className="flex">
        <div className="min-w-0 flex-1 bg-[#eee]">
          <Toolbar />
          <main className="mt-4 mr-[14px] ml-3 flex min-h-[614px] flex-col border border-[#555]">
            <ClaimSummary />
            <ClaimDetails />
            <ActionBar />
            <ChargeTable />
          </main>
          <TotalsBar />
        </div>
        <div className="w-[5px] border-r-2 border-l-2 border-l-[#4f6296] border-r-[#7cc3d6] bg-[#cfe0ee]" />
      </div>
    </div>
  );
}
